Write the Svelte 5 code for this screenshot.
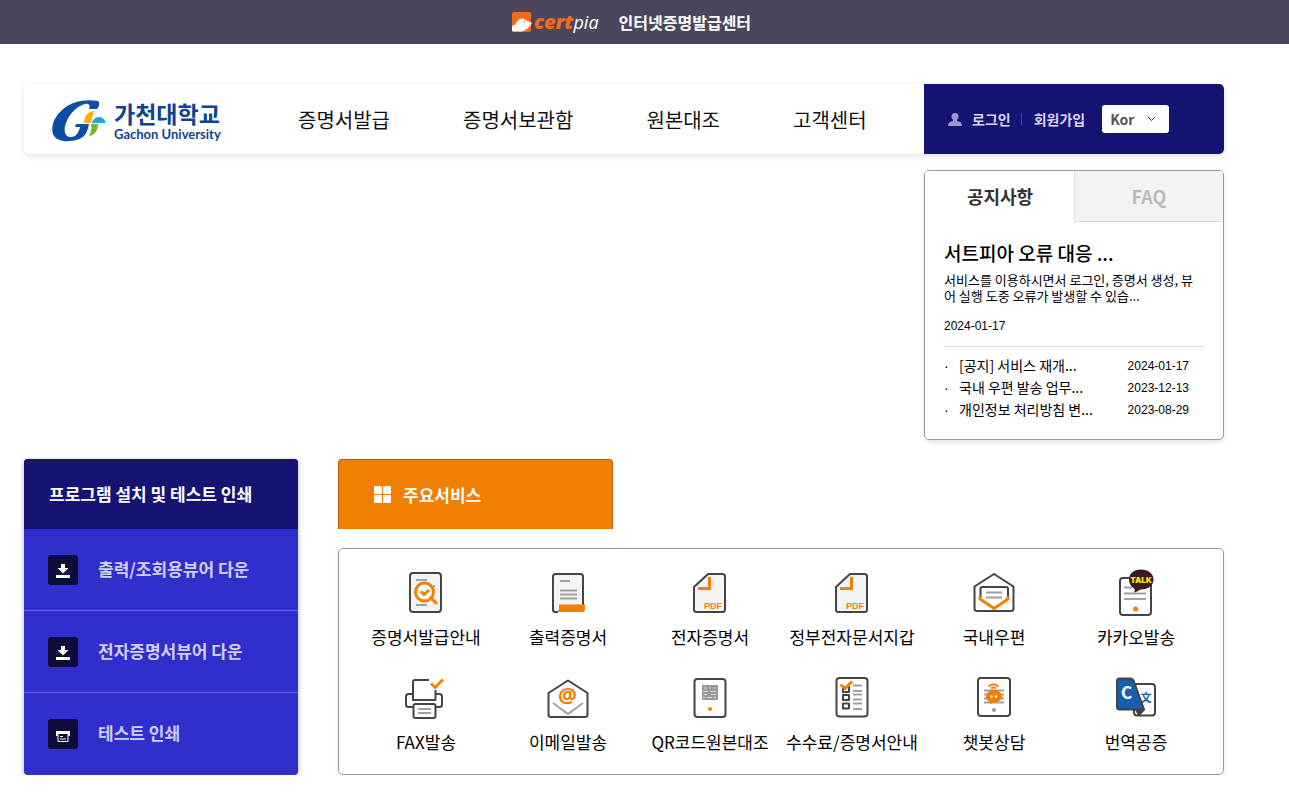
<script>
  const menu = ['증명서발급', '증명서보관함', '원본대조', '고객센터'];

  const notices = [
    { title: '[공지] 서비스 재개...', date: '2024-01-17' },
    { title: '국내 우편 발송 업무...', date: '2023-12-13' },
    { title: '개인정보 처리방침 변...', date: '2023-08-29' },
  ];

  const programs = [
    { icon: 'down', label: '출력/조회용뷰어 다운' },
    { icon: 'down', label: '전자증명서뷰어 다운' },
    { icon: 'print', label: '테스트 인쇄' },
  ];

  const services = [
    { icon: 'guide', label: '증명서발급안내' },
    { icon: 'print', label: '출력증명서' },
    { icon: 'pdf', label: '전자증명서' },
    { icon: 'pdf', label: '정부전자문서지갑' },
    { icon: 'post', label: '국내우편' },
    { icon: 'talk', label: '카카오발송' },
    { icon: 'fax', label: 'FAX발송' },
    { icon: 'email', label: '이메일발송' },
    { icon: 'qr', label: 'QR코드원본대조' },
    { icon: 'fee', label: '수수료/증명서안내' },
    { icon: 'chatbot', label: '챗봇상담' },
    { icon: 'translate', label: '번역공증' },
  ];

  let lang = $state('Kor');
  let tab = $state('notice');
</script>

<header class="topbar">
  <a class="certpia" href="#top" aria-label="certpia">
    <svg width="20" height="20" viewBox="0 0 20 20" aria-hidden="true">
      <rect width="19" height="20" rx="2" fill="#f26a1b" />
      <path d="M0 14c4-1 4-4 7-6.500c2-1.500 4-1.500 5.500 0L20 11c-3 5-7 8-12 8.500H1.500A1.500 1.500 0 0 1 0 18z" fill="#fff" />
      <circle cx="12.500" cy="9.500" r=".8" fill="#f26a1b" />
    </svg>
    <span class="brand"><b>cert</b>pia</span>
  </a>
  <strong class="center-name">인터넷증명발급센터</strong>
</header>

<div class="page">
  <div class="gnb">
    <a class="school" href="#home">
      <svg width="54" height="42" viewBox="0 0 54 42" aria-hidden="true">
        <path d="M46 1C34-1 20 1 10 10C1 18-2 29 2 36C6 42 17 42 24 40C32 38 35 34 37 24H24L23 27H28C27 32 24 37 19 37C13 37 11 31 14 23C17 14 25 6 33 4C38 3 38 6 37 9H45C47 7 48 3 46 1z" fill="#0b4da2" />
        <path d="M42 11L39 23h-7c0-7 4-12 10-12z" fill="#fbb116" />
        <path d="M40 23c1-4 4-6 7-6c4 0 6 3 6.500 6z" fill="#1ba7e0" />
        <path d="M39 24h7c0 6-3 11-9 12c2-4 3-7 2-12z" fill="#76b82a" />
      </svg>
      <span class="school-name">
        <span class="ko">가천대학교</span>
        <span class="en">Gachon University</span>
      </span>
    </a>
    <nav class="menu">
      {#each menu as item}
        <a href="#menu">{item}</a>
      {/each}
    </nav>
    <div class="member">
      <svg width="14" height="13" viewBox="0 0 14 13" aria-hidden="true">
        <circle cx="7" cy="3.500" r="3.500" fill="#9a99cf" />
        <path d="M5 6h4v2c3 .5 5 2 5 5H0c0-3 2-4.500 5-5z" fill="#9a99cf" />
      </svg>
      <a class="login" href="#login">로그인</a>
      <a class="join" href="#join">회원가입</a>
      <span class="lang">
        <select aria-label="Language" bind:value={lang}>
          <option>Kor</option>
          <option>Eng</option>
        </select>
        <svg width="9" height="6" viewBox="0 0 9 6" aria-hidden="true">
          <path d="M1 1l3.500 3.500L8 1" fill="none" stroke="#333" />
        </svg>
      </span>
    </div>
  </div>

  <section class="board">
    <div class="tabs">
      <button type="button" class:on={tab === 'notice'} onclick={() => (tab = 'notice')}>공지사항</button>
      <button type="button" class:on={tab === 'faq'} onclick={() => (tab = 'faq')}>FAQ</button>
    </div>
    <div class="board-body">
      <h2>서트피아 오류 대응 ...</h2>
      <p>서비스를 이용하시면서 로그인, 증명서 생성, 뷰어 실행 도중 오류가 발생할 수 있습...</p>
      <time>2024-01-17</time>
      <ul>
        {#each notices as notice}
          <li>
            <a href="#notice">{notice.title}</a>
            <time>{notice.date}</time>
          </li>
        {/each}
      </ul>
    </div>
  </section>

  <div class="columns">
    <aside class="programs">
      <h2>프로그램 설치 및 테스트 인쇄</h2>
      {#each programs as program}
        <a href="#program">
          <svg width="30" height="30" viewBox="0 0 30 30" aria-hidden="true">
            <rect width="30" height="30" rx="3" fill="#0e0c38" />
            {#if program.icon === 'down'}
              <path d="M13 9h4v4h3.500L15 18.500L9.500 13H13zM8 20h14v3H8z" fill="#fff" />
            {:else}
              <path d="M8 12h14v5h-2v-2H10v2H8z" fill="#fff" />
              <path d="M10 15.500v7h10v-7M12 17.500h3M12 20h6" fill="none" stroke="#fff" />
            {/if}
          </svg>
          <span>{program.label}</span>
        </a>
      {/each}
    </aside>

    <section class="main-services">
      <h2>
        <svg width="17" height="17" viewBox="0 0 17 17" fill="#fff" aria-hidden="true">
          <rect width="8" height="8" rx="1" />
          <rect x="9" width="8" height="8" rx="1" />
          <rect y="9" width="8" height="8" rx="1" />
          <rect x="9" y="9" width="8" height="8" rx="1" />
        </svg>
        주요서비스
      </h2>
      <div class="grid">
        {#each services as service}
          <a href="#service">
            <svg class="icon" viewBox="0 0 44 44" aria-hidden="true">
              {#if service.icon === 'guide'}
                <rect class="line paper" x="6" y="2" width="31" height="39" rx="3" />
                <path class="rule" d="M12 9h11M12 34h11M29 15h2" />
                <circle class="accent thick" cx="20.500" cy="21" r="9" fill="#fff" />
                <path class="accent thick" d="M27 27l5 5" stroke-linecap="round" />
                <path class="accent thick" d="M17 20.500l3 3l5-4.500" />
              {:else if service.icon === 'print'}
                <path class="line paper" d="M12 41H9.500q-2.500 0-2.500-2.500V5.500q0-2.500 2.500-2.500h25q2.500 0 2.500 2.500v30" />
                <path class="rule" d="M14 10h10M14 19.500h17M14 23.500h17M14 27.500h17" />
                <path class="solid" d="M13 33.500h26v4.500q0 3-3 3H11q2-1 2-4z" />
              {:else if service.icon === 'pdf'}
                <path class="line paper" d="M20 3h14.500q2.500 0 2.500 2.500v33q0 2.500-2.500 2.500h-26q-2.500 0-2.500-2.500V16z" />
                <path class="accent thick" d="M10 17.500h11.500V6" />
                <text class="pdf" x="16" y="38">PDF</text>
              {:else if service.icon === 'post'}
                <path class="line" d="M22 3L2.500 15.500V37.500q0 2.500 2.500 2.500h34q2.500 0 2.500-2.500V15.500z" />
                <path class="line" d="M8.500 27V18q0-2 2-2h23.500q2 0 2 2v9" />
                <path class="rule" d="M14 21.500h16M14 26.500h16" />
                <path class="accent thick" d="M8 25v3l14 9.500l14-9.500v-3" />
              {:else if service.icon === 'talk'}
                <rect class="line" x="6" y="7" width="31" height="37" rx="3" />
                <path class="rule" d="M10 16.500h8M10 22.500h22M10 28h22" />
                <circle class="solid" cx="21.500" cy="38" r="2.500" />
                <path d="M27-1.500c7 0 12.500 4 12.500 10s-5.500 10-12.500 10c-2 0-4 3-7 3c1-2 1-3 0-4c-3-2-5-5-5-9c0-6 5-10 12-10z" fill="#371d1e" />
                <text class="talk" x="27" y="12">TALK</text>
              {:else if service.icon === 'fax'}
                <path class="line" d="M9 31H4.500q-2.500 0-2.500-2.500v-8q0-2.500 2.500-2.500h4.500M32 18h3.500q2.500 0 2.500 2.500v8q0 2.500-2.500 2.500h-3.500" />
                <path class="line" d="M25 4H11q-2 0-2 2v18h22.500v-10" />
                <rect class="line" x="9.500" y="28" width="22" height="14" rx="2" fill="#fff" />
                <path class="rule" d="M14 33h13M14 37h13" />
                <path class="accent thick" d="M27 7.500l4 4L39 3.500" />
              {:else if service.icon === 'email'}
                <path class="line" d="M22 4.500L2.500 17v21.500q0 2.500 2.500 2.500h34q2.500 0 2.500-2.500V17z" />
                <path class="rule" d="M7 27l15 11l15-11" />
                <text class="at" x="21.500" y="27">@</text>
              {:else if service.icon === 'qr'}
                <rect class="line" x="6.500" y="3" width="31" height="38" rx="3" />
                <rect x="14" y="9" width="16" height="15" fill="#999" />
                <path d="M16 12h3m2 0h2m3 0h2M15 15.500h5m2 0h6M16 18.500h3m4 0h5M15 21.500h2m2 0h5m2 0h2" stroke="#ddd" fill="none" />
                <circle class="solid" cx="22" cy="33" r="2" />
              {:else if service.icon === 'fee'}
                <rect class="line" x="6.500" y="2" width="31" height="38.500" rx="3" />
                <path class="line" d="M13 11h6v5h-6zM13 19h6v5h-6zM13 27.500h6v5h-6z" />
                <path class="rule" d="M23 9.500h9M23 15h9M23 18.500h9M23 23.500h9M23 27.500h9M23 33h9" />
                <path class="accent thick" d="M10.500 8.500l4.500 4L22 5.500" />
              {:else if service.icon === 'chatbot'}
                <rect class="line" x="6" y="2" width="32" height="38" rx="3" />
                <path class="rule" d="M12 14.500h20M12 18.500h20M12 22.500h20M12 26.500h20" />
                <path class="accent" d="M16.500 10.500q5-4.500 10 0M19 12.500q2.500-2 5 0" />
                <path class="solid" d="M22 14c4 0 7 2 7.500 5q2 1.500 0 3c-1 3-4 4.500-7.500 4.500l-4 1.500v-2q-3-1-3.500-4q-2-1.500 0-3c.5-3 3.500-5 7.500-5z" />
                <circle cx="19.500" cy="20.500" r="1.200" fill="#fff" />
                <circle cx="24" cy="20.500" r="1.200" fill="#fff" />
                <circle cx="22" cy="34" r="2" fill="#999" />
              {:else}
                <rect class="line" x="20" y="8" width="21" height="31.500" rx="3" />
                <text class="han" x="32" y="26">文</text>
                <path class="line" d="M22 33.500h8L25 39z" fill="#444" />
                <path class="line" d="M5.500 2.500h11q2 0 3 2l10.500 29H5.500q-2.500 0-2.500-2.500v-26q0-2.500 2.500-2.500z" fill="#1560ad" />
                <text class="cee" x="12.500" y="23">C</text>
              {/if}
            </svg>
            <span>{service.label}</span>
          </a>
        {/each}
      </div>
    </section>
  </div>
</div>

<style>
  :global(body) {
    margin: 0;
    background: #fff;
    color: #000;
    font-family: "Noto Sans CJK KR", sans-serif;
  }
  a {
    color: inherit;
    text-decoration: none;
  }
  h2,
  p,
  ul {
    margin: 0;
    padding: 0;
  }
  .topbar {
    display: flex;
    align-items: center;
    justify-content: center;
    gap: 20px;
    height: 44px;
    padding-right: 26px;
    background: #4a475c;
    color: #fff;
  }
  .certpia {
    display: flex;
    align-items: center;
    gap: 2px;
  }
  .brand {
    font: italic 18px/24px "Open Sans", sans-serif;
  }
  .brand b {
    color: #f26a1b;
    font-size: 20px;
    font-weight: 800;
  }
  .center-name {
    font-size: 16px;
    line-height: 24px;
  }
  .page {
    max-width: 1200px;
    margin: 40px 65px 0 24px;
  }
  .gnb {
    display: flex;
    height: 70px;
    border-radius: 5px;
    box-shadow: 0 2px 6px rgba(0, 0, 0, 0.12);
  }
  .school {
    display: flex;
    align-items: center;
    gap: 8px;
    box-sizing: border-box;
    width: 274px;
    padding: 4px 0 0 28px;
    color: #0b4590;
  }
  .school-name {
    display: flex;
    flex-direction: column;
  }
  .ko {
    font-size: 23px;
    font-weight: 700;
    line-height: 26px;
  }
  .en {
    font: 700 13px/16px Lato, sans-serif;
  }
  .menu {
    display: flex;
    flex: 1;
    align-items: center;
    gap: 73px;
    color: #111;
    font-size: 20px;
  }
  .member {
    display: flex;
    align-items: center;
    box-sizing: border-box;
    width: 300px;
    padding-left: 24px;
    border-radius: 0 5px 5px 0;
    background: #161473;
    color: #d6d5f0;
    font-size: 14px;
    font-weight: 700;
    line-height: 20px;
  }
  .login {
    margin-left: 10px;
  }
  .join {
    display: flex;
    align-items: center;
    margin-right: 17px;
  }
  .join::before {
    content: "";
    width: 1px;
    height: 12px;
    margin: 0 12px 0 10px;
    background: #3f3d8f;
  }
  .lang {
    position: relative;
  }
  .lang select {
    appearance: none;
    display: block;
    width: 67px;
    height: 28px;
    padding: 0 8px;
    border: 0;
    border-radius: 3px;
    background: #fff;
    color: #555;
    font: 700 14px/28px "Noto Sans CJK KR", sans-serif;
  }
  .lang svg {
    position: absolute;
    top: 11px;
    right: 13px;
    pointer-events: none;
  }
  .board {
    box-sizing: border-box;
    width: 300px;
    margin: 16px 0 0 auto;
    overflow: hidden;
    border: 1px solid #999;
    border-radius: 5px;
    box-shadow: 0 2px 5px rgba(0, 0, 0, 0.12);
  }
  .tabs {
    display: grid;
    grid-template-columns: 1fr 1fr;
  }
  .tabs button {
    height: 51px;
    padding: 0;
    border: solid #ddd;
    border-width: 0 0 1px 1px;
    background: #f3f3f3;
    color: #bbb;
    font: 700 18px/26px "Noto Sans CJK KR", sans-serif;
  }
  .tabs .on {
    border-color: transparent;
    background: #fff;
    color: #333;
  }
  .board-body {
    padding: 19px 19px 18px;
    font-size: 13px;
    line-height: 16px;
  }
  .board-body h2 {
    margin-bottom: 7px;
    font-size: 19px;
    font-weight: 500;
    line-height: 24px;
  }
  .board-body time {
    display: block;
    font: 12px/16px "Liberation Sans", sans-serif;
  }
  .board-body > time {
    margin-top: 14px;
  }
  .board-body ul {
    margin-top: 12px;
    padding-top: 8px;
    border-top: 1px solid #ddd;
    list-style: none;
  }
  .board-body li {
    display: flex;
    align-items: center;
    height: 22px;
    padding-right: 15px;
    font-size: 14px;
  }
  .board-body li a {
    padding-bottom: 2px;
  }
  .board-body li::before {
    content: "·";
    width: 15px;
    font-family: "Liberation Sans", sans-serif;
  }
  .board-body li time {
    margin-left: auto;
  }
  .columns {
    display: flex;
    gap: 40px;
    margin-top: 19px;
  }
  .programs {
    flex: none;
    width: 274px;
    overflow: hidden;
    border-radius: 4px;
    background: #302ecd;
    box-shadow: 0 1px 5px rgba(0, 0, 0, 0.3);
  }
  .programs h2 {
    padding-left: 25px;
    background: #161473;
    color: #fff;
    font-size: 17px;
    font-weight: 700;
    line-height: 70px;
  }
  .programs a {
    display: flex;
    align-items: center;
    gap: 20px;
    box-sizing: border-box;
    height: 82px;
    padding-left: 24px;
    border-bottom: 1px solid #6866dc;
    color: #d0cff5;
    font-size: 17px;
    font-weight: 700;
    line-height: 24px;
  }
  .programs a span {
    padding-bottom: 2px;
  }
  .programs a:last-child {
    border-bottom: 0;
    padding-bottom: 1px;
  }
  .main-services {
    flex: 1;
    min-width: 0;
  }
  .main-services h2 {
    display: flex;
    align-items: center;
    gap: 12px;
    box-sizing: border-box;
    width: 275px;
    height: 70px;
    padding-left: 35px;
    border: 1px solid #a8610f;
    border-bottom: 0;
    border-radius: 4px 4px 0 0;
    background: #f28000;
    color: #fff;
    font-size: 17px;
    font-weight: 700;
  }
  .grid {
    display: grid;
    grid-template-columns: repeat(6, 1fr);
    row-gap: 27px;
    margin-top: 19px;
    padding: 22px 16px 20px;
    border: 1px solid #999;
    border-radius: 5px;
    box-shadow: 0 2px 5px rgba(0, 0, 0, 0.1);
  }
  .grid a {
    display: flex;
    flex-direction: column;
    align-items: center;
    gap: 10px;
    font-size: 17px;
    line-height: 24px;
    white-space: nowrap;
  }
  .icon {
    width: 44px;
    height: 44px;
    overflow: visible;
    fill: none;
  }
  .line {
    stroke: #444;
    stroke-width: 2;
    stroke-linejoin: round;
  }
  .paper {
    fill: #f5f4f4;
  }
  .rule {
    stroke: #a0a0a0;
    stroke-width: 2;
  }
  .accent {
    stroke: #f28000;
    stroke-width: 2;
  }
  .thick {
    stroke-width: 3;
  }
  .solid {
    fill: #f28000;
  }
  .pdf {
    fill: #f28000;
    font: 700 9px "Liberation Sans", sans-serif;
  }
  .talk {
    fill: #ffe600;
    font: 900 8px Inter, sans-serif;
    text-anchor: middle;
  }
  .at {
    fill: #f28000;
    font: 700 21px "Open Sans", sans-serif;
    text-anchor: middle;
  }
  .han {
    fill: #1560ad;
    font: 700 11px "Noto Sans CJK KR", sans-serif;
    text-anchor: middle;
  }
  .cee {
    fill: #fff;
    font: 700 17px "Noto Sans CJK KR", sans-serif;
    text-anchor: middle;
  }
</style>
